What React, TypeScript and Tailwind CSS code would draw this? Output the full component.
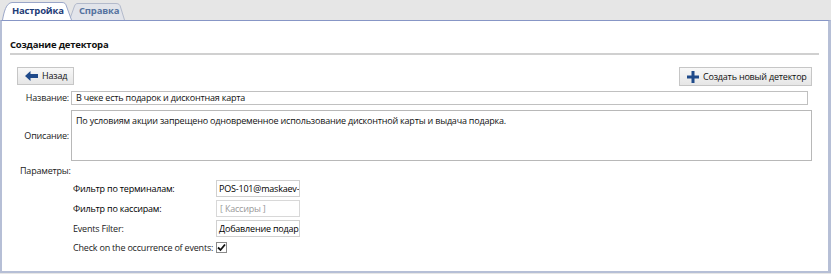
import React from "react";

const font = { fontFamily: '"Open Sans", "Noto Sans", sans-serif', letterSpacing: "-0.2px" };

function BackIcon() {
  return (
    <svg width="13" height="10" viewBox="0 0 13 10">
      <path d="M0 5 L5.5 0 L5.5 3 L13 3 L13 7 L5.5 7 L5.5 10 Z" fill="#1f4a8a" />
    </svg>
  );
}

function PlusIcon() {
  return (
    <svg width="12" height="12" viewBox="0 0 12 12">
      <path d="M4.5 0 H7.5 V4.5 H12 V7.5 H7.5 V12 H4.5 V7.5 H0 V4.5 H4.5 Z" fill="#1f4a8a" />
    </svg>
  );
}

function Tab({ label, active }: { label: string; active?: boolean }) {
  return (
    <div className={`relative h-[20px] flex items-center ${active ? "w-[70px] z-10" : "w-[56px] -ml-[3px]"}`}>
      <svg className="absolute inset-0" width={active ? 70 : 56} height="20" viewBox={active ? "0 0 70 20" : "0 0 56 20"}>
        {active ? (
          <path d="M0.5 20 C2 12 4 3 10 2.5 L60 2.5 C63 2.5 63.5 4 64 5 L69.5 20" fill="#ffffff" stroke="#9aa6c8" strokeWidth="1" />
        ) : (
          <path d="M0.5 20 L5.5 6 C6.5 4 7 3.5 9 3.5 L47 3.5 C50 3.5 51 5 51.5 7 L55.5 20" fill="#e2e4ea" stroke="#b3bacb" strokeWidth="1" />
        )}
      </svg>
      <span
        className={`relative text-[9.5px] font-bold pt-[2px] ${active ? "pl-[10px] text-[#1f3d78]" : "pl-[10px] text-[#5673a0]"}`}
      >
        {label}
      </span>
    </div>
  );
}

function Row({ label, children, dark }: { label: string; children: React.ReactNode; dark?: boolean }) {
  return (
    <div className="flex items-center h-[20px]">
      <div className={`w-[143px] text-[9px] ${dark ? "text-black font-medium" : "text-[#222]"}`}>{label}</div>
      {children}
    </div>
  );
}

export default function App() {
  return (
    <div className="w-[831px] h-[274px] bg-[#e6e6e6] flex flex-col overflow-hidden" style={font}>
      <div className="h-[20px] flex items-end pl-[2px]">
        <Tab label="Настройка" active />
        <Tab label="Справка" />
      </div>
      <div className="flex-1 bg-white border-t border-t-[#8796c6] border-l-2 border-l-[#b6bfd6] border-r-[3px] border-r-[#b6bfd6] border-b-2 border-b-[#b6bfd6] mb-[1px] pl-[8px] pr-[9px]">
        <div className="pt-[17px] pb-[1px] leading-[14px] text-[9.5px] font-bold text-[#111]">Создание детектора</div>
        <div className="h-[2px] bg-[#d0d0d0]" />
        <div className="flex justify-between items-start mt-[12px] pl-[7px] pr-[7px]">
          <button className="h-[18px] w-[57px] flex items-center gap-[4px] pl-[7px] border border-[#c6c6c6] bg-gradient-to-b from-[#f8f8f8] to-[#e6e6e6] text-[9px] text-[#111] whitespace-nowrap">
            <BackIcon />
            <span>Назад</span>
          </button>
          <button className="h-[19px] w-[133px] flex items-center gap-[4px] pl-[7px] border border-[#c6c6c6] bg-gradient-to-b from-[#f8f8f8] to-[#e6e6e6] text-[9px] text-[#111] whitespace-nowrap">
            <PlusIcon />
            <span>Создать новый детектор</span>
          </button>
        </div>
        <div className="flex items-center mt-[5px]">
          <div className="w-[61px] text-right pr-[2px] text-[9px] text-[#222]">Название:</div>
          <div className="w-[737px] h-[14px] border border-[#c0c0c0] flex items-center pl-[4px] text-[9px] text-[#111]">
            В чеке есть подарок и дисконтная карта
          </div>
        </div>
        <div className="flex items-center mt-[5px]">
          <div className="w-[61px] text-right pr-[2px] text-[9px] text-[#222]">Описание:</div>
          <div className="w-[741px] h-[51px] border border-[#b8b8b8] pl-[4px] pt-[3px] text-[9px] text-[#111]">
            По условиям акции запрещено одновременное использование дисконтной карты и выдача подарка.
          </div>
        </div>
        <div className="mt-[3px] pl-[10px] text-[9px] text-[#222]">Параметры:</div>
        <div className="pl-[63px] mt-[1px] flex flex-col">
          <Row label="Фильтр по терминалам:" dark>
            <div className="w-[84px] h-[17px] border border-[#d0d0d0] flex items-center pl-[2px] text-[9px] font-medium text-black overflow-hidden whitespace-nowrap">
              POS-101@maskaev-
            </div>
          </Row>
          <Row label="Фильтр по кассирам:" dark>
            <div className="w-[84px] h-[17px] border border-[#d8d8d8] flex items-center pl-[3px] text-[9px] text-[#999] overflow-hidden whitespace-nowrap">
              [ Кассиры ]
            </div>
          </Row>
          <Row label="Events Filter:">
            <div className="w-[84px] h-[17px] border border-[#d0d0d0] flex items-center pl-[2px] text-[9px] font-medium text-black overflow-hidden whitespace-nowrap">
              Добавление подар
            </div>
          </Row>
          <div className="flex items-center h-[18px]">
            <span className="text-[9px] text-[#222]">Check on the occurrence of events:</span>
            <div className="ml-[3px] w-[11px] h-[11px] border border-[#8a8a8a] bg-white flex items-center justify-center">
              <svg width="9" height="9" viewBox="0 0 9 9">
                <path d="M1 4.5 L3.5 7 L8 1.5" fill="none" stroke="#111" strokeWidth="1.8" />
              </svg>
            </div>
          </div>
        </div>
      </div>
    </div>
  );
}
